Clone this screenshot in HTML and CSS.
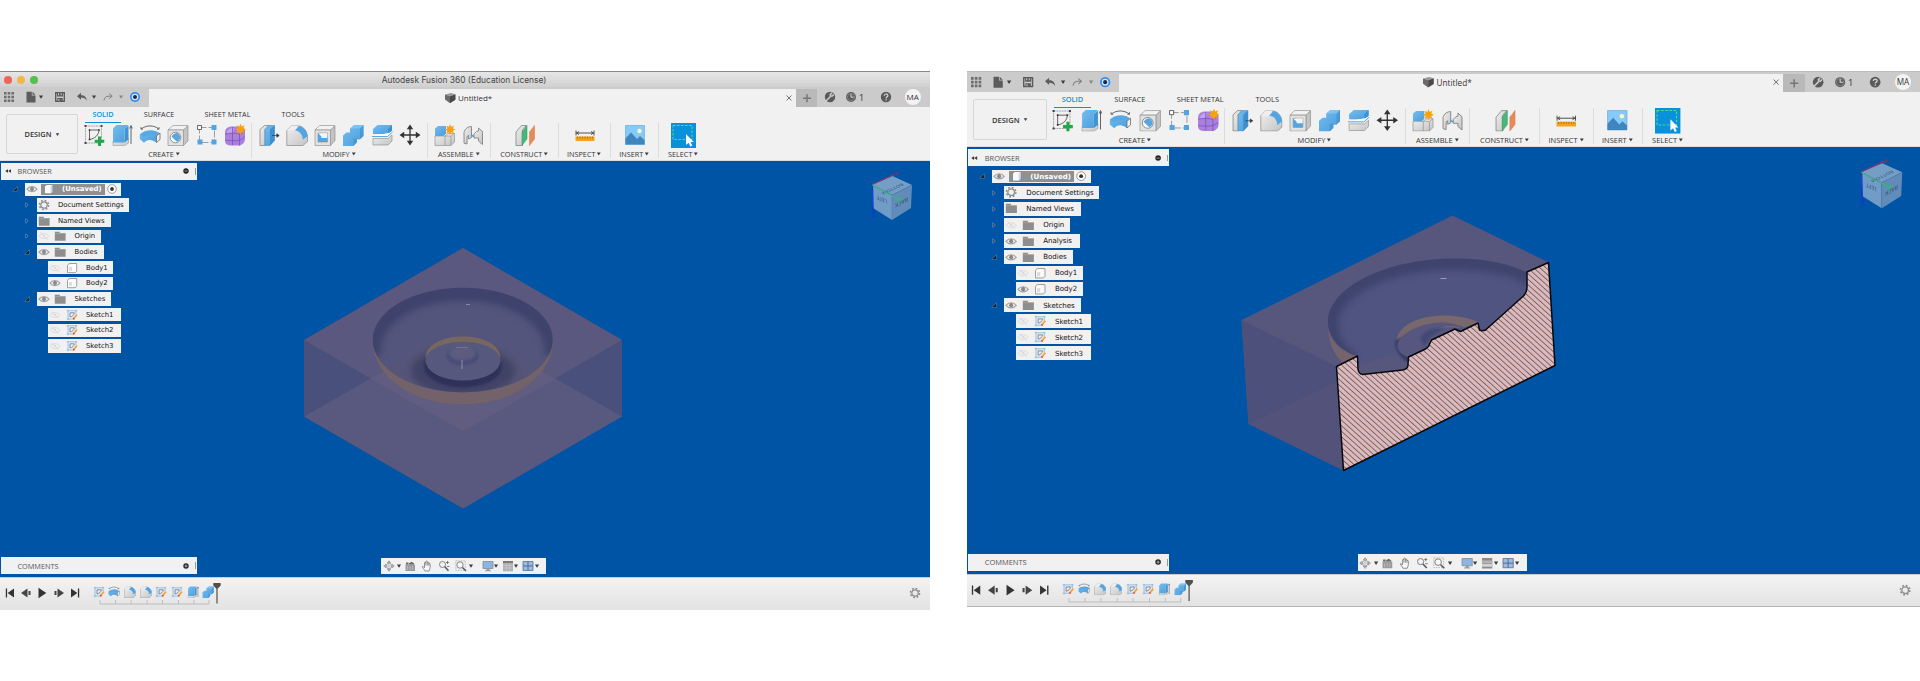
FILE: index.html
```html
<!DOCTYPE html>
<html lang="en">
<head>
<meta charset="utf-8">
<title>Autodesk Fusion 360 (Education License)</title>
<link rel="stylesheet" href="styles.css">
</head>
<body>
<svg class="defs" width="0" height="0" aria-hidden="true">
<defs>
<linearGradient id="gBlue" x1="0" y1="0" x2="1" y2="1"><stop offset="0" stop-color="#74bdf0"/><stop offset="1" stop-color="#4a9cdb"/></linearGradient>
<linearGradient id="gGray" x1="0" y1="0" x2="1" y2="1"><stop offset="0" stop-color="#efefef"/><stop offset="1" stop-color="#c4c4c4"/></linearGradient>
<filter id="b1"><feGaussianBlur stdDeviation="1"/></filter>
<filter id="b3" x="-30%" y="-30%" width="160%" height="160%"><feGaussianBlur stdDeviation="3.2"/></filter>
<pattern id="hatch" width="20" height="4.100" patternUnits="userSpaceOnUse" patternTransform="rotate(42)"><rect width="20" height="4.100" fill="#dcb9bb"/><path d="M0 2H20" stroke="#5a4c50" stroke-width=".8"/></pattern>
</defs>
<symbol id="i-grid" viewBox="0 0 12 12"><path fill="#6e6e6e" d="M1 1h2.600v2.600H1zM4.700 1h2.600v2.600H4.700zM8.400 1H11v2.600H8.400zM1 4.700h2.600v2.600H1zM4.700 4.700h2.600v2.600H4.700zM8.400 4.700H11v2.600H8.400zM1 8.400h2.600V11H1zM4.700 8.400h2.600V11H4.700zM8.400 8.400H11V11H8.400z"/></symbol>
<symbol id="i-file" viewBox="0 0 12 12"><path fill="#5c5c5c" d="M1.500.8h5.300v3.600h3.700v7h-9z"/><path fill="#5c5c5c" d="M7.500.8l3 2.900h-3z"/></symbol>
<symbol id="i-save" viewBox="0 0 12 12"><path fill="none" stroke="#5c5c5c" stroke-width="1.400" d="M1.700 1.700h8.600v8.600H1.700z"/><path fill="#5c5c5c" d="M3 1.500h6v4H3zM3.300 7h5.400v3.600H3.300z"/><path fill="#cbcbcb" d="M4 2.200h1v2H4zM6.600 2.200h1v2h-1zM4.400 8h1v2h-1z"/></symbol>
<symbol id="i-undo" viewBox="0 0 12 12"><path fill="#5c5c5c" d="M1 5.200L5 1.800v2.400c3.500 0 5.600 1.800 5.800 5.600-1.300-2.400-3-3.200-5.800-3.200v2.200z"/></symbol>
<symbol id="i-redo" viewBox="0 0 12 12"><path fill="none" stroke="#808080" stroke-width="1" d="M2 9.500c.3-3 2-4.300 5.200-4.300h2.500M7.200 2.500l3 2.700-3 2.700"/></symbol>
<symbol id="i-caret" viewBox="0 0 6 6"><path d="M.9 1.500h4.200L3 4.800z" fill="currentColor"/></symbol>
<symbol id="i-orb" viewBox="0 0 12 12"><circle cx="6" cy="6" r="5" fill="#2f8df5"/><circle cx="6" cy="6" r="3.300" fill="#d5e8fb"/><circle cx="6" cy="6" r="2" fill="#1c2a4a"/></symbol>
<symbol id="i-box" viewBox="0 0 12 12"><path fill="#9a9a9a" d="M1 2.500L7 1l4.500 1.300L6 4.200z"/><path fill="#6a6a6a" d="M1 2.500l5 1.700v7L1 7.500z"/><path fill="#484848" d="M6 4.200l5.500-1.900v5.500L6 11.200z"/></symbol>
<symbol id="i-x" viewBox="0 0 8 8"><path d="M1.500 1.500l5 5M6.500 1.500l-5 5" stroke="#666" stroke-width=".9"/></symbol>
<symbol id="i-plus" viewBox="0 0 12 12"><path d="M6 2.200v8M2 6.200h8" stroke="#777" stroke-width="1.500"/></symbol>
<symbol id="i-wrench" viewBox="0 0 12 12"><circle cx="6" cy="6" r="5.200" fill="#5a5a5a"/><path d="M1 11L6.500 5.500M9.800 3.400L8 5.200 6.500 4.800 6.200 3.500 8 1.900" stroke="#cbcbcb" stroke-width="1.500" fill="none"/></symbol>
<symbol id="i-clock" viewBox="0 0 12 12"><circle cx="6" cy="6" r="4.900" fill="#5a5a5a"/><circle cx="6" cy="6" r="3.600" fill="none" stroke="#aaa" stroke-width=".5"/><path d="M6 3v3.200h2.600" stroke="#ddd" stroke-width="1" fill="none"/></symbol>
<symbol id="i-help" viewBox="0 0 12 12"><circle cx="6" cy="6" r="5.200" fill="#5a5a5a"/><path d="M4.200 4.800C4.200 2.400 7.900 2.400 7.900 4.600 7.900 5.900 6.100 5.800 6.100 7.400M6.100 8.300v1.300" stroke="#ddd" stroke-width="1.200" fill="none"/></symbol>

<symbol id="r-sketch" viewBox="0 0 22 22"><path fill="none" stroke="#8b8b8b" stroke-width=".7" stroke-dasharray="2 .6" d="M2.500 2h16v17h-16z"/><path fill="#444" d="M1.500 1h2v2h-2zM17.500 1h2v2h-2zM1.500 18h2v2h-2z"/><path fill="none" stroke="#555" stroke-width=".9" d="M6.500 6h9.500c-.5 5-3.500 8.500-9.500 9.500z"/><path fill="#333" d="M5.700 5.200h1.600v1.600H5.700zM15.200 5.200h1.600v1.600h-1.600zM5.700 14.700h1.600v1.600H5.700z"/><path fill="#22a84a" d="M15 12.500h3v3.200h3.300v3H18V22h-3v-3.300h-3.300v-3H15z"/></symbol>
<symbol id="r-extrude" viewBox="0 0 22 22"><path fill="url(#gGray)" stroke="#888" stroke-width=".5" d="M2 17h11.500l4-3v5l-4 2.600H2z"/><path fill="#3f93d3" d="M13.500 5l4-3.500v14l-4 3z"/><path fill="url(#gBlue)" d="M2 4.500L5.500 1h12l-4 4v13.500H2z"/><path d="M20 20V2.500M18.700 4.500L20 1.500l1.300 3" stroke="#444" stroke-width=".8" fill="none"/></symbol>
<symbol id="r-revolve" viewBox="0 0 22 22"><path fill="none" stroke="#444" stroke-width=".8" d="M2.500 4.800C7 1 15 1 19.500 4.800M2 3.200v1.900h2M20 3.200v1.900h-2"/><path fill="url(#gBlue)" d="M.8 10.500C5 5.500 14 5 19 8.200l-1.500 1.300v9c-4.500-3.500-9.500-3.500-12.500.3L.8 15z"/><path fill="#5aa8e0" d="M5 13c3-3 8.500-3 12-.5l3.500-3.500-1.500-.8C13 5.500 6 6.500 1 10.500z"/><path fill="#f2f2f2" stroke="#555" stroke-width=".7" d="M17.500 12l3.500-3v6.500l-3.500 3z"/></symbol>
<symbol id="r-hole" viewBox="0 0 22 22"><path fill="#c4c4c4" stroke="#888" stroke-width=".6" d="M16.500 6l4.500-4v15l-4.500 4.500z"/><path fill="#f2f2f2" stroke="#888" stroke-width=".6" d="M1 6l5-4.500h15L16.500 6z"/><path fill="#e2e2e2" stroke="#888" stroke-width=".6" d="M1 6h15.500v15.500H1z"/><circle cx="8.500" cy="13.500" r="5.300" fill="#fafafa" stroke="#777" stroke-width=".8"/><path d="M4.500 12.500c1.500-2.500 3.500-3.500 5.500-3.500 2 .8 3.200 2.500 3.200 5-.5 2-1.700 3.200-3.200 3.800-2-1.800-3.500-3.300-5.500-5.300z" fill="#58a6df"/></symbol>
<symbol id="r-pattern" viewBox="0 0 22 22"><path d="M3.500 3.500h15v15h-15z" fill="none" stroke="#888" stroke-width=".8" stroke-dasharray="7 2"/><path d="M1.500 1.500h4v4h-4z" fill="#fff" stroke="#444" stroke-width=".8"/><path fill="#52a5e2" d="M15.500 1h5v5h-5zM1.500 15.500h5v5h-5zM15.500 15.500h5v5h-5z"/></symbol>
<symbol id="r-form" viewBox="0 0 22 22"><path fill="#a980de" d="M1 9c0-4 2-6 6-6.500h8c4 .5 6 2.500 6 5.500v7c0 3.500-2 5-5 6.500H6c-3.500-.5-5-2-5-5z"/><path fill="#c3a2ee" d="M3 8c1-3 3-4 7-4l-1 5-7 .5z"/><path fill="none" stroke="#7f52bb" stroke-width=".8" d="M1.200 10c4-1.200 11-1.200 14.500.3 2-1 4-2.600 5-3.300M1.200 16c5 1 11 1 14.500 0 2-.8 4-2 5-3M8.500 3v18M15.500 10v11.500"/><path fill="#f7a10c" d="M16 0l1.300 3.300L20.600 2l-1.400 3.300L22.400 6.600l-3.200 1.300 1.400 3.300-3.300-1.400L16 13l-1.300-3.200-3.300 1.400 1.400-3.300L9.600 6.600l3.200-1.300L11.400 2l3.300 1.300z" transform="translate(2.500 -.5) scale(.88)"/></symbol>
<symbol id="r-press" viewBox="0 0 22 22"><path fill="url(#gGray)" stroke="#777" stroke-width=".7" d="M2 5.500L6.500 1.500h4.300L7 5.500v16H2z"/><path fill="url(#gBlue)" stroke="#3986c2" stroke-width=".5" d="M7 5.500L11 1.500h5.500v15L12 21.500H7z"/><path fill="#3d8fd0" d="M12 5.500l4.500-4v15l-4.500 5z"/><path d="M14 11.500h5M18.800 9.800l2.400 1.700-2.400 1.700z" stroke="#333" stroke-width=".7" fill="#333"/></symbol>
<symbol id="r-fillet" viewBox="0 0 22 22"><path fill="url(#gGray)" stroke="#888" stroke-width=".7" d="M.8 6.500L5 2h8.500C18 3 21 7.500 21.500 12v5.500l-4.500 4H.8z"/><path fill="#eee" d="M.8 6.500L5 2h7L9 6.500z"/><path fill="#52a5e2" d="M9 6.500L13 2c5 .8 8 5.500 8.500 10L17 15.800C16.500 10 13.500 7 9 6.500z"/></symbol>
<symbol id="r-shell" viewBox="0 0 22 22"><path fill="#c4c4c4" stroke="#888" stroke-width=".6" d="M16.500 6L21 2v14.500l-4.500 5z"/><path fill="#f2f2f2" stroke="#888" stroke-width=".6" d="M1 6l4.500-4.500H21L16.500 6z"/><path fill="#e2e2e2" stroke="#888" stroke-width=".6" d="M1 6h15.500v15.500H1z"/><path fill="#fff" stroke="#777" stroke-width=".5" d="M4 9h9.500v9H4z"/><path fill="#52a5e2" d="M4 9l3.500 3.500h6V18H4z"/><path fill="#f4f4f4" d="M7.500 9.300h5.700v4.700H7.500z"/></symbol>
<symbol id="r-combine" viewBox="0 0 22 22"><path fill="url(#gBlue)" d="M1 11.500L4.500 8.500H8V4.500L12 1h9.500v11l-3.500 3.200h-3v3L11.500 22H1z"/><path fill="#3c8fd0" d="M18 4.500L21.500 1v11L18 15.200h-3v3L11.500 22v-7.500H18z" opacity=".6"/><path fill="#8ccaf3" d="M8 4.500L12 1h9.500L18 4.500z" opacity=".7"/></symbol>
<symbol id="r-split" viewBox="0 0 22 22"><path fill="url(#gBlue)" d="M2 5l4.500-4H21v5.500L17 10H2z"/><path fill="#3c8fd0" d="M17 5l4-4v5.500L17 10z"/><path fill="#fff" stroke="#4a9cdb" stroke-width=".9" d="M1 12.500h15.500L21.500 8"/><path fill="url(#gGray)" stroke="#888" stroke-width=".6" d="M2 14.500h15l4-3.500v6L17 21H2z"/></symbol>
<symbol id="r-move" viewBox="0 0 22 22"><path d="M11 3v16M3 11h16" stroke="#333" stroke-width="1.300"/><path fill="#333" d="M11 .5l3.200 4.700H7.800zM11 21.500l3.200-4.700H7.800zM.5 11l4.700-3.200v6.400zM21.500 11l-4.700-3.200v6.400z"/></symbol>
<symbol id="r-comp" viewBox="0 0 22 22"><path fill="url(#gGray)" stroke="#888" stroke-width=".6" d="M1 12h10l3-2.500h6.500V18L17 21.500H1zM11 12v9.500M11 12h6l3.500-2.500M17 12v9.500"/><path fill="url(#gBlue)" d="M1 4.500L4 2h8v7.500L9.500 12H1z"/><path fill="#f7a10c" d="M16 0l1.300 3.300L20.600 2l-1.400 3.300L22.400 6.600l-3.200 1.300 1.400 3.300-3.300-1.400L16 13l-1.300-3.200-3.300 1.400 1.400-3.300L9.600 6.600l3.200-1.300L11.400 2l3.300 1.300z" transform="translate(2.500 0) scale(.85)"/></symbol>
<symbol id="r-joint" viewBox="0 0 22 22"><path fill="url(#gGray)" stroke="#777" stroke-width=".8" d="M2 8.500C3 4.500 6 2.500 9.500 2.500v11l-3 1.500v-3.500L5 12.500V20l-3-.8z"/><path fill="url(#gGray)" stroke="#777" stroke-width=".8" d="M12 10l2.500-2.500L16.500 7V4l4 3.500v13l-4-3.500v-3H12z"/><path stroke="#4a9cdb" stroke-width="1.400" d="M9 11l3 1.500"/></symbol>
<symbol id="r-plane" viewBox="0 0 22 22"><path fill="url(#gGray)" stroke="#777" stroke-width=".7" d="M2 8l5.500-6.500h5L8.500 6v15.500H2z"/><path fill="#45b97a" stroke="#39905f" stroke-width=".5" d="M8 8l5-6.500V15l-5 6.500z"/><path fill="#e8895a" stroke="#d47747" stroke-width=".5" d="M15.500 8l5-6.500V15l-5 6.500z"/></symbol>
<symbol id="r-measure" viewBox="0 0 22 22"><path d="M2 6.500v5M20 6.500v5M2.500 9h17M5 7.500L2.500 9 5 10.500M17 7.500L19.500 9 17 10.500" stroke="#444" stroke-width=".9" fill="none"/><path fill="#f6a21a" d="M1.500 12.500h19V17h-19z"/><path d="M3.500 12.500v2M6 12.500v2M8.500 12.500v2M11 12.500v2M13.500 12.500v2M16 12.500v2M18.500 12.500v2" stroke="#8a5a0a" stroke-width=".6"/></symbol>
<symbol id="r-image" viewBox="0 0 22 22"><path fill="#86cbf7" stroke="#5aa6dc" stroke-width=".6" d="M1.500 1.500h19v19h-19z"/><circle cx="15.500" cy="7" r="2.200" fill="#fff6c9"/><path fill="#3e86bd" d="M1.500 20.500v-6l5.500-6 6 6.500 3-3 4.500 4v4.500z"/></symbol>
<symbol id="r-select" viewBox="0 0 25 25"><path fill="#0a91dc" d="M0 0h25v25H0z"/><path fill="none" stroke="#59d98c" stroke-width="1" stroke-dasharray="2.500 1.500" d="M2 2.500h19v14H2z"/><path fill="#fff" d="M15 11v11l2.600-2.300 1.700 3.800 2-1-1.700-3.500h3.200z"/></symbol>

<symbol id="t-eye" viewBox="0 0 12 12"><path d="M1 6.200C3.500 2.800 8.500 2.800 11 6.200 8.500 9.400 3.500 9.400 1 6.200z" fill="#eee" stroke="#a0a0a0" stroke-width="1.100"/><circle cx="6" cy="6" r="2" fill="#888"/></symbol>
<symbol id="t-off" viewBox="0 0 12 12"><path d="M1 6.200C3.500 2.800 8.500 2.800 11 6.200 8.500 9.400 3.500 9.400 1 6.200zM2 2.500l8 7" fill="none" stroke="#d8d8d8" stroke-width=".9"/><circle cx="6" cy="6" r="1.300" fill="#dcdcdc"/></symbol>
<symbol id="t-folder" viewBox="0 0 12 12"><path fill="#8e8e8e" d="M.8 1.800h5v1.300h5.800V10.800H.8z"/><path fill="#d5d5d5" d="M.8 3.300h10.800v.6H.8z" opacity=".5"/></symbol>
<symbol id="t-gear" viewBox="0 0 12 12"><circle cx="6" cy="6" r="3.200" fill="none" stroke="#8a8a8a" stroke-width="1.200"/><circle cx="6" cy="6" r="4.600" fill="none" stroke="#8a8a8a" stroke-width="1.500" stroke-dasharray="1.800 1.810"/></symbol>
<symbol id="t-doc" viewBox="0 0 12 12"><path fill="#fafafa" stroke="#777" stroke-width=".7" d="M2.500 3.500l2.200-2H10.500v7.300L8.500 10.800h-6z"/><path fill="#ccd6ea" d="M8.500 3.500l2-2v7.300l-2 2z"/></symbol>
<symbol id="t-body" viewBox="0 0 12 12"><path fill="#fbfbfb" stroke="#888" stroke-width=".8" d="M1.500 3.500C2 1.800 3.500 1.500 5 1.500h5.700V8.500c0 1.500-1.200 2.200-2.700 2.200H1.500z"/><path fill="#ddd" d="M3 5h3v4H3z"/></symbol>
<symbol id="t-sketch" viewBox="0 0 12 12"><path fill="none" stroke="#7fb2e0" stroke-width=".8" d="M.8 1.800h10.400M.8 10h6M2 .8v10.400M10 .8v4.200"/><path fill="none" stroke="#5f7390" stroke-width=".8" d="M4 3.800h4.300C8.200 6 6.500 7.500 4 8z"/><path stroke="#f2a43a" stroke-width="1.800" d="M11 5.500L8 9.300"/><path stroke="#d8553a" stroke-width="1.800" d="M8.300 9L7.200 10.400"/></symbol>
<symbol id="t-open" viewBox="0 0 6 6"><path fill="#101820" stroke="#7b95b5" stroke-width=".5" d="M5.300.7v4.600H.7z"/></symbol>
<symbol id="t-closed" viewBox="0 0 6 6"><path fill="#1c3f74" stroke="#6f8fb8" stroke-width=".7" d="M1.700.8L4.300 3 1.700 5.200z"/></symbol>
<symbol id="t-radio" viewBox="0 0 12 12"><circle cx="6" cy="6" r="4.300" fill="#fff" stroke="#777" stroke-width=".7"/><circle cx="6" cy="6" r="1.900" fill="#333"/></symbol>
<symbol id="p-rew" viewBox="0 0 8 6"><path d="M4 1.200v3.600L1.200 3zM7 1.200v3.600L4.200 3z" fill="#333"/></symbol>
<symbol id="p-minus" viewBox="0 0 8 8"><circle cx="4" cy="4" r="2.700" fill="#222"/><path d="M2.500 4h3" stroke="#aaa" stroke-width=".9"/></symbol>
<symbol id="p-plus" viewBox="0 0 8 8"><circle cx="4" cy="4" r="2.700" fill="#222"/><path d="M2.500 4h3M4 2.500v3" stroke="#ccc" stroke-width=".8"/></symbol>

<symbol id="n-orbit" viewBox="0 0 12 12"><path fill="none" stroke="#777" stroke-width=".7" d="M6 .8l1.600 2H4.400zM6 11.200l1.600-2H4.400zM.8 6l2-1.600v3.200zM11.200 6l-2-1.600v3.200z"/><circle cx="6" cy="6" r="2.700" fill="none" stroke="#8a8a8a" stroke-width=".7"/><path d="M6 3.300v5.400M3.300 6h5.400" stroke="#9fb6d4" stroke-width=".7"/></symbol>
<symbol id="n-look" viewBox="0 0 12 12"><path fill="#9a9a9a" d="M1.500 4.500h9.500v6.500H1.500z"/><path fill="#6a6a6a" d="M2 2.500h2.500v2H2zM5 3.200l2.500-1.400L10 3.300v1.200H5z"/><path d="M3.500 6v4M6 6v4M8.500 6v4" stroke="#c4c4c4" stroke-width=".7"/></symbol>
<symbol id="n-hand" viewBox="0 0 12 12"><path fill="#f8f8f8" stroke="#666" stroke-width=".7" d="M4 11C3 9 1.800 8 1.200 6.800c.8-.6 1.600 0 2.300.9V3c.1-1 1.200-1 1.300 0V1.800c.2-1 1.400-1 1.500 0v.9c.2-.9 1.400-.8 1.500.2v1c.3-.8 1.300-.6 1.400.3 0 3-.2 4.700-1.200 6.800zM4.800 3v2.500M6.300 2.500v3M7.800 3.500v2.300"/></symbol>
<symbol id="n-zoom" viewBox="0 0 12 12"><circle cx="4.500" cy="4.500" r="3" fill="#eef3f8" stroke="#777" stroke-width=".9"/><path d="M6.800 6.800l3.700 4" stroke="#555" stroke-width="1.500"/><path d="M9.500 1v3M8 2.500h3M9 6.500h2.500" stroke="#555" stroke-width=".7"/></symbol>
<symbol id="n-fit" viewBox="0 0 12 12"><path fill="none" stroke="#999" stroke-width=".6" stroke-dasharray="1.500 1" d="M.8.800h9.500v9.500H.8z"/><circle cx="5" cy="5" r="3.200" fill="#f6fafc" stroke="#777" stroke-width=".9"/><path d="M7.500 7.500L11 11" stroke="#555" stroke-width="1.500"/></symbol>
<symbol id="n-screen" viewBox="0 0 12 12"><path fill="#8fb4df" stroke="#8292a8" stroke-width=".9" d="M1 1.500h10v7H1z"/><path fill="#9a9a9a" d="M4.500 8.800h3v1.400h1.500v1h-6v-1h1.500z"/></symbol>
<symbol id="n-grid" viewBox="0 0 12 12"><path fill="#b0b0b0" d="M1 1h10v10.300H1z"/><path fill="#7a7a7a" d="M1 1h10v2H1z"/><path d="M1 5.500h10M1 8h10M4.300 3v8M7.700 3v8" stroke="#d4d4d4" stroke-width=".5"/></symbol>
<symbol id="n-shade" viewBox="0 0 12 12"><path fill="#8a8a8a" d="M1 1h10v10.300H1z"/><path fill="#b4b4b4" d="M1 3.500h10v2.300H1z"/><path fill="#d2d2d2" d="M1 6.500h10v3H1z"/></symbol>
<symbol id="n-views" viewBox="0 0 12 12"><path fill="#9bbbe2" stroke="#5a7196" stroke-width=".8" d="M1 1.500h10v9H1z"/><path d="M6 1.500v9M1 6h10" stroke="#4a6490" stroke-width=".9"/></symbol>
<symbol id="m-first" viewBox="0 0 12 12"><path fill="#333" d="M1.800 1.500h1.300v9H1.800zM10 1.500v9L3.600 6z"/></symbol>
<symbol id="m-prev" viewBox="0 0 12 12"><path fill="#444" d="M7.500 1.500v9L1 6zM8.500 4h2v4h-2z"/></symbol>
<symbol id="m-play" viewBox="0 0 12 12"><path fill="#333" d="M2.500.8v10.400L10.300 6z"/></symbol>
<symbol id="m-next" viewBox="0 0 12 12"><path fill="#444" d="M4.500 1.500v9L11 6zM1.500 4h2v4h-2z"/></symbol>
<symbol id="m-last" viewBox="0 0 12 12"><path fill="#333" d="M8.900 1.500h1.300v9H8.900zM2 1.500v9L8.400 6z"/></symbol>
<symbol id="m-track" viewBox="0 0 112 6"><path d="M1 0v4h109V0M16.500 0v4M32 0v4M48 0v4M63.500 0v4M79.500 0v4M95 0v4" fill="none" stroke="#bdbdbd" stroke-width="1"/></symbol>
<symbol id="m-mark" viewBox="0 0 8 22"><path d="M.3 1h7.400v2.500L4.600 6.800V21.500H3.400V6.800L.3 3.500z" fill="#505050"/></symbol>
<symbol id="cube-faces" viewBox="0 0 50 50"><path fill="#8aaccd" d="M7 14l20.500-9L47 14 27 24z"/><path fill="#84a9ce" d="M7 14l20 10v25L8 37z"/><path fill="#7396bd" d="M27 24l20-10-1 23-19 12z"/><path fill="none" stroke="#5f7f9f" stroke-width=".5" d="M7 14l20 10 20-10M27 24v25"/></symbol>
<symbol id="cube-axes" viewBox="0 0 50 50"><path stroke="#c02850" stroke-width="1" d="M7 13.500L30 3"/><path stroke="#1830d8" stroke-width="1.200" d="M7.500 14l.8 30"/><path stroke="#35d060" stroke-width="1" d="M7 14l28 15"/><path fill="none" stroke="#b02848" stroke-width=".8" d="M30 .8l3.500 4M33.500.8L30 4.800"/><path fill="none" stroke="#1830d8" stroke-width=".8" d="M7 41h3.500L7 45.500h3.500"/><path fill="#35d060" d="M32 27.500l5-1-3 5z"/></symbol>
</svg>

<main class="desk">
<section class="window">
  <header class="titlebar"><span class="lights"><i class="red"></i><i class="yellow"></i><i class="green"></i></span><h1>Autodesk Fusion 360 (Education License)</h1></header>
  <div class="tabbar">
    <div class="quick"><svg><use href="#i-grid"/></svg><svg><use href="#i-file"/></svg><svg class="caret"><use href="#i-caret"/></svg><svg><use href="#i-save"/></svg><svg><use href="#i-undo"/></svg><svg class="caret"><use href="#i-caret"/></svg><svg><use href="#i-redo"/></svg><svg class="caret dim"><use href="#i-caret"/></svg><svg><use href="#i-orb"/></svg></div>
    <div class="doc-tab"><svg class="doc-icon"><use href="#i-box"/></svg><span>Untitled*</span><svg class="close"><use href="#i-x"/></svg></div>
    <div class="account"><span class="new-tab"><svg><use href="#i-plus"/></svg></span><svg class="wrench"><use href="#i-wrench"/></svg><svg class="clock"><use href="#i-clock"/></svg><span class="jobs">1</span><svg class="help"><use href="#i-help"/></svg><span class="avatar">MA</span></div>
  </div>
  <div class="ribbon">
    <div class="design">DESIGN<svg class="caret"><use href="#i-caret"/></svg></div>
    <div class="ribbon-body">
      <nav class="tabs"><span class="active">SOLID</span><span class="surface">SURFACE</span><span class="sheet">SHEET METAL</span><span class="tools">TOOLS</span></nav>
      <div class="groups">
        <div class="group create"><div class="icons"><svg><use href="#r-sketch"/></svg><svg><use href="#r-extrude"/></svg><svg><use href="#r-revolve"/></svg><svg><use href="#r-hole"/></svg><svg><use href="#r-pattern"/></svg><svg><use href="#r-form"/></svg></div><div class="label">CREATE<svg class="caret"><use href="#i-caret"/></svg></div></div>
        <div class="group modify"><div class="icons"><svg><use href="#r-press"/></svg><svg><use href="#r-fillet"/></svg><svg><use href="#r-shell"/></svg><svg><use href="#r-combine"/></svg><svg><use href="#r-split"/></svg><svg><use href="#r-move"/></svg></div><div class="label">MODIFY<svg class="caret"><use href="#i-caret"/></svg></div></div>
        <div class="group assemble"><div class="icons"><svg><use href="#r-comp"/></svg><svg><use href="#r-joint"/></svg></div><div class="label">ASSEMBLE<svg class="caret"><use href="#i-caret"/></svg></div></div>
        <div class="group construct"><div class="icons"><svg><use href="#r-plane"/></svg></div><div class="label">CONSTRUCT<svg class="caret"><use href="#i-caret"/></svg></div></div>
        <div class="group inspect"><div class="icons"><svg><use href="#r-measure"/></svg></div><div class="label">INSPECT<svg class="caret"><use href="#i-caret"/></svg></div></div>
        <div class="group insert"><div class="icons"><svg><use href="#r-image"/></svg></div><div class="label">INSERT<svg class="caret"><use href="#i-caret"/></svg></div></div>
        <div class="group select"><div class="icons"><svg><use href="#r-select"/></svg></div><div class="label">SELECT<svg class="caret"><use href="#i-caret"/></svg></div></div>
      </div>
    </div>
  </div>
  <div class="viewport">
    <svg class="model" viewBox="0 161 930 416">
      <path fill="#4a507c" d="M463 248l159 92v76.500l-159 92-159-92V340z"/>
      <path fill="#5a587e" d="M463 248l159 92-159 91.500L304 340z"/>
      <path fill="#59587e" d="M463 326l159 90.500-159 92-159-92z"/>
      <path fill="#605d80" d="M463 326l92.500 52.700-92.500 52.800-92.500-52.800z"/>
      <clipPath id="bowl"><ellipse cx="462.700" cy="340" rx="90" ry="52.200"/></clipPath>
      <path fill="#74626a" d="M372.700 337c-2 36 38 67 90 67s92-31 90-67c-3 32-43 54.700-90 54.700s-87-22.700-90-54.700z"/>
      <path fill="none" stroke="#806850" stroke-width=".8" opacity=".7" d="M373 342c2 36 40 61.500 89.700 61.500s88-25.500 89.700-61.500"/>
      <g clip-path="url(#bowl)">
        <path fill="#53557d" d="M372 285h182v110H372z"/>
        <path fill="#565576" opacity=".6" d="M463 326l92.500 52.700-92.500 52.800-92.500-52.800z"/>
        <path fill="none" stroke="#3a4069" stroke-width="20" filter="url(#b3)" opacity=".85" d="M371 356c-4-36 36-65 91.700-65s96 29 91.700 65"/>
        <ellipse cx="463" cy="371" rx="52" ry="24" fill="#3a3d61" filter="url(#b3)" opacity=".75"/>
      </g>
      <ellipse cx="463" cy="366" rx="39" ry="21.500" fill="#2f335a" filter="url(#b1)"/>
      <ellipse cx="463" cy="360.500" rx="37.500" ry="20" fill="#57587e"/>
      <path fill="#786660" d="M425.500 358c0-13 16.800-21.500 37.500-21.500s37.500 8.500 37.500 21.500c-4-10-19-16-37.500-16s-33.500 6-37.500 16z"/>
      <ellipse cx="462.500" cy="356" rx="16" ry="9.500" fill="#4a4e77" filter="url(#b1)"/>
      <ellipse cx="462.500" cy="353" rx="13" ry="7.500" fill="#5b5b81" filter="url(#b1)"/>
      <path stroke="#a09fb5" stroke-width=".8" d="M462 360v9" fill="none"/><path stroke="#817784" stroke-width=".8" d="M456 347.500h12"/><path stroke="#8c8ba5" stroke-width="1" d="M466 304.500h4"/>
    </svg>
    <svg class="viewcube" viewBox="0 0 50 50"><use href="#cube-faces"/><g class="cube-text"><text transform="matrix(-.9 .42 -.6 -.5 37 12)">BOTTOM</text><text transform="matrix(-.85 -.42 0 -1 22 29)">LEFT</text><text transform="matrix(-.9 .5 0 -1 43 26)">BACK</text></g><use href="#cube-axes"/></svg>
    <div class="panel browser"><svg class="rew"><use href="#p-rew"/></svg><span>BROWSER</span><svg class="dot"><use href="#p-minus"/></svg></div>
    <ul class="tree">
      <li><svg class="arrow"><use href="#t-open"/></svg><div class="item"><svg><use href="#t-eye"/></svg><b><svg><use href="#t-doc"/></svg>(Unsaved)</b><svg class="radio"><use href="#t-radio"/></svg></div></li>
      <li class="l2"><svg class="arrow"><use href="#t-closed"/></svg><div class="item w-doc"><svg><use href="#t-gear"/></svg><span>Document Settings</span></div></li>
      <li class="l2"><svg class="arrow"><use href="#t-closed"/></svg><div class="item w-views"><svg><use href="#t-folder"/></svg><span>Named Views</span></div></li>
      <li class="l2"><svg class="arrow"><use href="#t-closed"/></svg><div class="item w-origin"><svg><use href="#t-off"/></svg><svg><use href="#t-folder"/></svg><span>Origin</span></div></li>
      <li class="l2"><svg class="arrow"><use href="#t-open"/></svg><div class="item w-bodies"><svg><use href="#t-eye"/></svg><svg><use href="#t-folder"/></svg><span>Bodies</span></div></li>
      <li class="l3"><div class="item w-body"><svg><use href="#t-off"/></svg><svg><use href="#t-body"/></svg><span>Body1</span></div></li>
      <li class="l3"><div class="item w-body"><svg><use href="#t-eye"/></svg><svg><use href="#t-body"/></svg><span>Body2</span></div></li>
      <li class="l2"><svg class="arrow"><use href="#t-open"/></svg><div class="item w-sketches"><svg><use href="#t-eye"/></svg><svg><use href="#t-folder"/></svg><span>Sketches</span></div></li>
      <li class="l3"><div class="item w-sketch"><svg><use href="#t-off"/></svg><svg><use href="#t-sketch"/></svg><span>Sketch1</span></div></li>
      <li class="l3"><div class="item w-sketch"><svg><use href="#t-off"/></svg><svg><use href="#t-sketch"/></svg><span>Sketch2</span></div></li>
      <li class="l3"><div class="item w-sketch"><svg><use href="#t-off"/></svg><svg><use href="#t-sketch"/></svg><span>Sketch3</span></div></li>
    </ul>
    <div class="panel comments"><span>COMMENTS</span><svg class="dot"><use href="#p-plus"/></svg></div>
    <div class="navbar"><svg><use href="#n-orbit"/></svg><svg class="caret"><use href="#i-caret"/></svg><svg><use href="#n-look"/></svg><svg><use href="#n-hand"/></svg><svg><use href="#n-zoom"/></svg><svg><use href="#n-fit"/></svg><svg class="caret"><use href="#i-caret"/></svg><svg><use href="#n-screen"/></svg><svg class="caret"><use href="#i-caret"/></svg><svg><use href="#n-grid"/></svg><svg class="caret"><use href="#i-caret"/></svg><svg><use href="#n-views"/></svg><svg class="caret"><use href="#i-caret"/></svg></div>
  </div>
  <footer class="timeline">
    <div class="player"><svg><use href="#m-first"/></svg><svg><use href="#m-prev"/></svg><svg><use href="#m-play"/></svg><svg><use href="#m-next"/></svg><svg><use href="#m-last"/></svg></div>
    <div class="history"><div class="steps"><svg><use href="#t-sketch"/></svg><svg><use href="#r-revolve"/></svg><svg><use href="#r-fillet"/></svg><svg><use href="#r-fillet"/></svg><svg><use href="#t-sketch"/></svg><svg><use href="#t-sketch"/></svg><svg><use href="#r-extrude"/></svg><svg><use href="#r-combine"/></svg></div><svg class="track"><use href="#m-track"/></svg></div>
    <svg class="marker"><use href="#m-mark"/></svg>
    <svg class="settings"><use href="#t-gear"/></svg>
  </footer>
</section>

<section class="window large">
  <div class="tabbar">
    <div class="quick"><svg><use href="#i-grid"/></svg><svg><use href="#i-file"/></svg><svg class="caret"><use href="#i-caret"/></svg><svg><use href="#i-save"/></svg><svg><use href="#i-undo"/></svg><svg class="caret"><use href="#i-caret"/></svg><svg><use href="#i-redo"/></svg><svg class="caret dim"><use href="#i-caret"/></svg><svg><use href="#i-orb"/></svg></div>
    <div class="doc-tab"><svg class="doc-icon"><use href="#i-box"/></svg><span>Untitled*</span><svg class="close"><use href="#i-x"/></svg></div>
    <div class="account"><span class="new-tab"><svg><use href="#i-plus"/></svg></span><svg class="wrench"><use href="#i-wrench"/></svg><svg class="clock"><use href="#i-clock"/></svg><span class="jobs">1</span><svg class="help"><use href="#i-help"/></svg><span class="avatar">MA</span></div>
  </div>
  <div class="ribbon">
    <div class="design">DESIGN<svg class="caret"><use href="#i-caret"/></svg></div>
    <div class="ribbon-body">
      <nav class="tabs"><span class="active">SOLID</span><span class="surface">SURFACE</span><span class="sheet">SHEET METAL</span><span class="tools">TOOLS</span></nav>
      <div class="groups">
        <div class="group create"><div class="icons"><svg><use href="#r-sketch"/></svg><svg><use href="#r-extrude"/></svg><svg><use href="#r-revolve"/></svg><svg><use href="#r-hole"/></svg><svg><use href="#r-pattern"/></svg><svg><use href="#r-form"/></svg></div><div class="label">CREATE<svg class="caret"><use href="#i-caret"/></svg></div></div>
        <div class="group modify"><div class="icons"><svg><use href="#r-press"/></svg><svg><use href="#r-fillet"/></svg><svg><use href="#r-shell"/></svg><svg><use href="#r-combine"/></svg><svg><use href="#r-split"/></svg><svg><use href="#r-move"/></svg></div><div class="label">MODIFY<svg class="caret"><use href="#i-caret"/></svg></div></div>
        <div class="group assemble"><div class="icons"><svg><use href="#r-comp"/></svg><svg><use href="#r-joint"/></svg></div><div class="label">ASSEMBLE<svg class="caret"><use href="#i-caret"/></svg></div></div>
        <div class="group construct"><div class="icons"><svg><use href="#r-plane"/></svg></div><div class="label">CONSTRUCT<svg class="caret"><use href="#i-caret"/></svg></div></div>
        <div class="group inspect"><div class="icons"><svg><use href="#r-measure"/></svg></div><div class="label">INSPECT<svg class="caret"><use href="#i-caret"/></svg></div></div>
        <div class="group insert"><div class="icons"><svg><use href="#r-image"/></svg></div><div class="label">INSERT<svg class="caret"><use href="#i-caret"/></svg></div></div>
        <div class="group select"><div class="icons"><svg><use href="#r-select"/></svg></div><div class="label">SELECT<svg class="caret"><use href="#i-caret"/></svg></div></div>
      </div>
    </div>
  </div>
  <div class="viewport">
    <svg class="model" viewBox="966.500 148 954 426.700">
      <path fill="#57567d" d="M1452 216.500l95.500 46.500 7 103.500-211.500 105-95-46.500-7-104z"/>
      <path fill="#4d507a" d="M1241 321l95 46.500 1 16-89 41.500z"/>
      <path fill="#52527a" d="M1248 425l89-43 6 89.500z"/>
      <clipPath id="halfbowl"><path d="M1357 358c-22-8-31-26-29.500-38 4-35 64-61.500 130.500-60.500 32 .5 55 7 69 14.500v26l-41 34-76 40h-53z"/></clipPath>
      <g clip-path="url(#halfbowl)">
        <path fill="#505480" d="M1320 250h220v150h-220z"/>
        <path fill="none" stroke="#3a4069" stroke-width="24" filter="url(#b3)" opacity=".8" d="M1350 365c-22-12-25-30-23.500-45 4-36 64-62 131.500-61 32 .5 60 7 74 16.500"/>
        <path fill="#5a597e" opacity=".7" d="M1357 366l45-13 10 20-50 8z"/>
      </g>
      <path fill="#75636e" d="M1328 330c2 13 12 21.500 29 27.500l-15 6.500c-9-10-14-20-14-34z"/>
      <path fill="#79686b" d="M1396 343c1-17 22-26.500 48-26.500 13 0 24 2 34 7l-15 5c-26-7-56-2-66 16z"/>
      <path fill="#373c66" filter="url(#b1)" d="M1395 341c-1 9 3 16 11 22l10-8c-9-4-12-10-12-17z"/>
      <path fill="#56567e" d="M1397 345c5-14 28-22.500 50-21.500l16 4-9 2-46 29c-8-3-12-8-11-13.500z"/>
      <path fill="none" stroke="#75656f" stroke-width="1.200" d="M1434 331c8-4 18-4 26-2"/>
      <path fill="#434976" filter="url(#b1)" d="M1420 340c2-8 12-12 24-11l-14 9-6 9z"/>
      <path stroke="#9c9bb5" stroke-width="1" d="M1440 279.500h6"/>
      <path fill="url(#hatch)" stroke="#08080c" stroke-width="1.500" stroke-linejoin="round" d="M1336 367.500l21-10.500.5 13q.5 5 4.500 5.500l40-4.500q6-1 5.500-6l.5-7 17-8 3-2.500 3-6.500 23.500-11 5.500 2.500 17.500-8.500 1.500 7q3 1.500 6 0l38.500-34.500q3-4 3-8V273l21.500-9.500 6.500 103-211.500 105z"/>
    </svg>
    <svg class="viewcube" viewBox="0 0 50 50"><use href="#cube-faces"/><g class="cube-text"><text transform="matrix(-.9 .42 -.6 -.5 37 12)">BOTTOM</text><text transform="matrix(-.85 -.42 0 -1 22 29)">LEFT</text><text transform="matrix(-.9 .5 0 -1 43 26)">BACK</text></g><use href="#cube-axes"/></svg>
    <div class="panel browser"><svg class="rew"><use href="#p-rew"/></svg><span>BROWSER</span><svg class="dot"><use href="#p-minus"/></svg></div>
    <ul class="tree">
      <li><svg class="arrow"><use href="#t-open"/></svg><div class="item"><svg><use href="#t-eye"/></svg><b><svg><use href="#t-doc"/></svg>(Unsaved)</b><svg class="radio"><use href="#t-radio"/></svg></div></li>
      <li class="l2"><svg class="arrow"><use href="#t-closed"/></svg><div class="item w-doc"><svg><use href="#t-gear"/></svg><span>Document Settings</span></div></li>
      <li class="l2"><svg class="arrow"><use href="#t-closed"/></svg><div class="item w-views"><svg><use href="#t-folder"/></svg><span>Named Views</span></div></li>
      <li class="l2"><svg class="arrow"><use href="#t-closed"/></svg><div class="item w-origin"><svg><use href="#t-off"/></svg><svg><use href="#t-folder"/></svg><span>Origin</span></div></li>
      <li class="l2"><svg class="arrow"><use href="#t-closed"/></svg><div class="item w-analysis"><svg><use href="#t-eye"/></svg><svg><use href="#t-folder"/></svg><span>Analysis</span></div></li>
      <li class="l2"><svg class="arrow"><use href="#t-open"/></svg><div class="item w-bodies"><svg><use href="#t-eye"/></svg><svg><use href="#t-folder"/></svg><span>Bodies</span></div></li>
      <li class="l3"><div class="item w-body"><svg><use href="#t-off"/></svg><svg><use href="#t-body"/></svg><span>Body1</span></div></li>
      <li class="l3"><div class="item w-body"><svg><use href="#t-eye"/></svg><svg><use href="#t-body"/></svg><span>Body2</span></div></li>
      <li class="l2"><svg class="arrow"><use href="#t-open"/></svg><div class="item w-sketches"><svg><use href="#t-eye"/></svg><svg><use href="#t-folder"/></svg><span>Sketches</span></div></li>
      <li class="l3"><div class="item w-sketch"><svg><use href="#t-off"/></svg><svg><use href="#t-sketch"/></svg><span>Sketch1</span></div></li>
      <li class="l3"><div class="item w-sketch"><svg><use href="#t-off"/></svg><svg><use href="#t-sketch"/></svg><span>Sketch2</span></div></li>
      <li class="l3"><div class="item w-sketch"><svg><use href="#t-off"/></svg><svg><use href="#t-sketch"/></svg><span>Sketch3</span></div></li>
    </ul>
    <div class="panel comments"><span>COMMENTS</span><svg class="dot"><use href="#p-plus"/></svg></div>
    <div class="navbar"><svg><use href="#n-orbit"/></svg><svg class="caret"><use href="#i-caret"/></svg><svg><use href="#n-look"/></svg><svg><use href="#n-hand"/></svg><svg><use href="#n-zoom"/></svg><svg><use href="#n-fit"/></svg><svg class="caret"><use href="#i-caret"/></svg><svg><use href="#n-screen"/></svg><svg class="caret"><use href="#i-caret"/></svg><svg><use href="#n-shade"/></svg><svg class="caret"><use href="#i-caret"/></svg><svg><use href="#n-views"/></svg><svg class="caret"><use href="#i-caret"/></svg></div>
  </div>
  <footer class="timeline">
    <div class="player"><svg><use href="#m-first"/></svg><svg><use href="#m-prev"/></svg><svg><use href="#m-play"/></svg><svg><use href="#m-next"/></svg><svg><use href="#m-last"/></svg></div>
    <div class="history"><div class="steps"><svg><use href="#t-sketch"/></svg><svg><use href="#r-revolve"/></svg><svg><use href="#r-fillet"/></svg><svg><use href="#r-fillet"/></svg><svg><use href="#t-sketch"/></svg><svg><use href="#t-sketch"/></svg><svg><use href="#r-extrude"/></svg><svg><use href="#r-combine"/></svg></div><svg class="track"><use href="#m-track"/></svg></div>
    <svg class="marker"><use href="#m-mark"/></svg>
    <svg class="settings"><use href="#t-gear"/></svg>
  </footer>
</section>
</main>
</body>
</html>
```
FILE: styles.css
```css
* { box-sizing: border-box; }
body { margin: 0; background: #fff; font-family: "Open Sans", "Noto Sans", sans-serif; color: #333; overflow: hidden; }
svg { flex: none; width: 12px; height: 12px; }
svg.defs { position: absolute; width: 0; height: 0; }
svg.caret { width: 6px; height: 6px; color: #3c3c3c; }
svg.caret.dim { color: #888; }

.desk { display: flex; align-items: flex-start; padding-top: 71px; height: 681px; }
.window { width: 930px; flex: none; }
.window.large { zoom: 1.0258; margin: 0 0 0 35.900px; border-top: 1px solid #bbb; }
.window.large .tabbar { height: 19.500px; }
.window.large .timeline { border-bottom: 1px solid #b5b5b5; }

.titlebar { height: 16px; display: flex; align-items: center; border-top: 1px solid #868a84; background: linear-gradient(#e6e6e6, #d0d0d0); }
.lights { display: flex; gap: 5px; padding-left: 4px; width: 100px; }
.lights i { width: 8px; height: 8px; border-radius: 50%; }
.red { background: #ec6559; }
.yellow { background: #f1b74a; }
.green { background: #55c04b; }
.titlebar h1 { flex: 1; margin: 0 102px 0 0; text-align: center; font: 400 8.400px Inter, sans-serif; color: #444; }

.tabbar { display: flex; height: 20px; background: #cbcbcb; }
.quick { display: flex; align-items: center; width: 148.500px; padding-left: 3px; }
.quick svg:nth-child(2) { margin-left: 9.500px; }
.quick svg:nth-child(3) { margin-left: 1.500px; }
.quick svg:nth-child(4) { margin-left: 10px; }
.quick svg:nth-child(5) { margin-left: 9.500px; }
.quick svg:nth-child(6) { margin-left: 3.500px; }
.quick svg:nth-child(7) { margin-left: 5px; }
.quick svg:nth-child(8) { margin-left: 4px; }
.quick svg:nth-child(9) { margin-left: 5px; }
.doc-tab { display: flex; align-items: center; width: 647.500px; margin-top: 2px; padding: 0 3px 1px 295px; background: #f1f1f1; font-size: 8px; }
.doc-tab span { margin-left: 2.500px; }
.doc-tab .close { width: 8px; height: 8px; margin-left: auto; }
.account { display: flex; align-items: center; flex: 1; font-size: 8px; }
.new-tab { display: flex; align-items: center; justify-content: center; width: 21px; height: 18px; margin-top: 2px; background: #b9b9b9; }
.wrench { margin-left: 7px; }
.clock { margin-left: 9px; }
.jobs { width: 8px; margin-left: 2px; font-size: 9px; }
.help { margin-left: 13px; }
.avatar { width: 16.500px; height: 16.500px; margin-left: 12.500px; border-radius: 50%; background: #f3f3f3; text-align: center; line-height: 16.500px; font-size: 8px; }

.ribbon { display: flex; height: 54px; padding-left: 6px; background: #f1f1f1; border-bottom: 1px solid #d9dde2; }
.design { display: flex; align-items: center; justify-content: center; gap: 3px; width: 72px; height: 40px; margin-top: 7px; border: 1px solid #d6d6d6; border-radius: 2px; font-size: 7.400px; font-weight: 600; }
.design svg.caret { width: 5px; height: 5px; }
.tabs { display: flex; height: 15.500px; padding-left: 7px; font-size: 7.200px; line-height: 15px; text-align: center; white-space: nowrap; }
.tabs .active { width: 36px; border-bottom: 1.500px solid #0a93dc; color: #0a93dc; font-weight: 600; }
.tabs .surface { width: 36px; margin-left: 20px; }
.tabs .sheet { width: 53px; margin-left: 24px; }
.tabs .tools { width: 26px; margin-left: 26px; }
.groups { display: flex; height: 37px; }
.group { border-right: 1px solid #dcdcdc; height: 35px; }
.group.select { border-right: 0; }
.create { width: 173.500px; }
.modify { width: 176.500px; }
.assemble { width: 63px; }
.construct { width: 68px; }
.inspect { width: 52px; }
.insert { width: 48px; }
.select { width: 49px; }
.icons { display: flex; justify-content: center; align-items: center; gap: 6.300px; height: 25px; }
.icons svg { width: 22px; height: 22px; }
.select .icons svg { width: 25px; height: 25px; }
.label { display: flex; align-items: center; justify-content: center; gap: 1px; height: 12px; font-size: 7.250px; }
.label svg.caret { width: 5.500px; height: 5.500px; }

.viewport { position: relative; height: 416px; background: #0054a5; overflow: hidden; }
.model { display: block; width: 930px; height: 416px; }
.viewcube { position: absolute; left: 864.500px; top: 10px; width: 50px; height: 50px; opacity: .85; }
.viewcube use { width: 50px; height: 50px; }
.cube-text { font: 600 5.500px "Open Sans", sans-serif; fill: #34465a; opacity: .7; }
.panel { position: absolute; left: 1px; width: 196px; display: flex; align-items: center; padding-right: 7px; background: #f1f1f1; font-size: 7.300px; color: #555; }
.panel::after { content: ""; position: absolute; right: 1px; top: 5px; bottom: 5px; border-left: 1px solid #999; }
.panel .dot { width: 8px; height: 8px; margin-left: auto; }
.browser { top: 2px; height: 16.500px; padding-left: 2.500px; }
.browser .rew { width: 8px; height: 6px; margin-right: 6px; }
.comments { top: 396.300px; height: 16.500px; padding-left: 16.500px; }

.tree { position: absolute; left: 0; top: 21.700px; margin: 0; padding: 0; list-style: none; font: 6.900px "DejaVu Sans", sans-serif; color: #111; }
.tree li { display: flex; align-items: center; height: 13.400px; margin-bottom: 2.270px; padding-left: 12px; }
.tree .arrow { width: 6px; height: 6px; margin-right: 7px; }
.tree .l2 { padding-left: 24px; }
.tree .l2 .arrow { margin-right: 6.500px; }
.tree .l3 { padding-left: 48px; }
.item { display: flex; align-items: center; height: 13.400px; padding-left: 1px; background: #f1f1f1; white-space: nowrap; }
.item svg + svg { margin-left: 4.500px; }
.item span { margin-left: 8.500px; letter-spacing: -.03px; }
.item b { display: flex; align-items: center; width: 63.500px; height: 11px; margin-left: 3px; padding-left: 1px; background: #909090; color: #fff; font-size: 6.900px; }
.item b svg { margin-right: 8px; }
.item .radio { margin: 0 3px 0 1.500px; }
.w-doc { width: 92.500px; }
.w-views { width: 74.500px; }
.w-origin { width: 64.500px; }
.w-analysis { width: 74px; }
.w-bodies { width: 67px; }
.w-body { width: 65px; }
.w-sketches { width: 74.500px; }
.w-sketch { width: 73px; }

.navbar { position: absolute; left: 381px; top: 396.800px; width: 165px; height: 16.500px; display: flex; align-items: center; padding-left: 1.500px; background: #f1f1f1; }
.navbar svg:nth-child(2), .navbar svg:nth-child(7) { margin-left: 1.500px; }
.navbar svg:nth-child(3) { margin-left: 2px; }
.navbar svg:nth-child(4), .navbar svg:nth-child(5) { margin-left: 5px; }
.navbar svg:nth-child(6) { margin-left: 4.500px; }
.navbar svg:nth-child(8) { margin-left: 7.500px; }
.navbar svg:nth-child(9), .navbar svg:nth-child(11) { margin-left: -.5px; }
.navbar svg:nth-child(10) { margin-left: 2.500px; }
.navbar svg:nth-child(12) { margin-left: 3px; }

.timeline { display: flex; height: 32.500px; border-top: 1px solid #c9ccd0; background: linear-gradient(#f3f3f3, #e3e3e3); }
.player { display: flex; gap: 4.400px; padding: 8.500px 0 0 3.500px; }
.history { padding: 8px 0 0 11.500px; width: 122px; }
.steps { display: flex; gap: 3.700px; }
.history .track { display: block; width: 112px; height: 6px; margin: 2px 0 0 6px; }
.marker { width: 8px; height: 22px; margin: 4px 0 0 9.500px; }
.settings { margin: 8.500px 9px 0 auto; }
```
